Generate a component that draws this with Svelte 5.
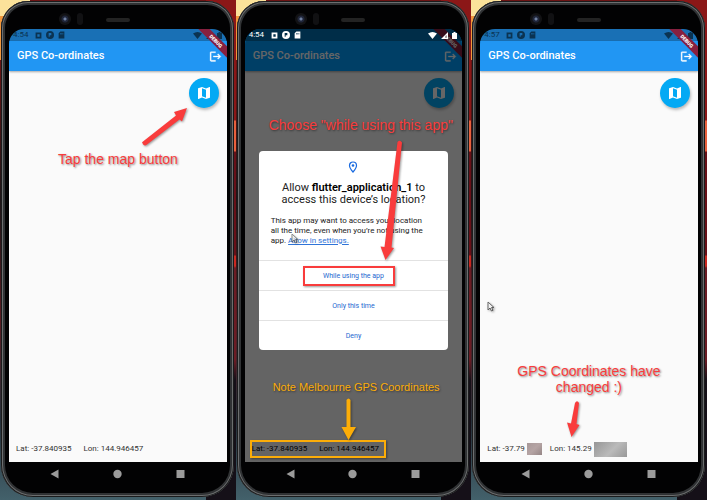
<script>
  const phones = [
    { id: 'tap', time: '4:54', lat: '-37.840935', lon: '144.946457', dim: false, redacted: false },
    { id: 'choose', time: '4:54', lat: '-37.840935', lon: '144.946457', dim: true, redacted: false },
    { id: 'changed', time: '4:57', lat: '-37.79', lon: '145.29', dim: false, redacted: true }
  ];
</script>

{#snippet pointer()}
  <path d="M1 1v8l2-2 1.500 3 1.500-.7L4.600 6.500H7z" fill="#fff" stroke="#444" stroke-width="1" />
{/snippet}

<main>
  {#each phones as phone (phone.id)}
    <section class="panel">
      <div class="phone">
        <div class="bezel">
          <span class="camera"></span>
          <span class="sensor"></span>
          <span class="speaker"></span>
        </div>

        <div class="screen" class:dim={phone.dim}>
          <div class="status">
            <span class="time">{phone.time}</span>
            <svg width="7" height="7" viewBox="0 0 12 12"><path fill="currentColor" fill-rule="evenodd" d="M1 1h10v10H1zM4 4v4h4V4z" /></svg>
            <svg width="8" height="8" viewBox="0 0 12 12"><path fill="currentColor" fill-rule="evenodd" d="M6 0a6 6 0 1 1 0 12A6 6 0 0 1 6 0M4 3v5.500h1.500V6.500H8V3z" /></svg>
            <svg width="7" height="8" viewBox="0 0 12 14"><path fill="currentColor" fill-rule="evenodd" d="M4 1h7v12H1V4zM4 3.500V6h1V3.500zm2 0V6h1V3.500zm2 0V6h1V3.500z" /></svg>
            <span class="spacer"></span>
            <svg width="9" height="7" viewBox="0 0 18 14"><path fill="currentColor" d="M0 3q9-6 18 0L9 14z" /></svg>
            <svg width="7" height="7" viewBox="0 0 14 14"><path fill="currentColor" fill-rule="evenodd" d="M14 0v14H0zM11 6L9 8v4h2z" /></svg>
            <svg width="5" height="7" viewBox="0 0 10 14"><path fill="currentColor" d="M0 2h3V0h4v2h3v12H0z" /></svg>
          </div>

          <header>
            <h1>GPS Co-ordinates</h1>
            <button class="logout" aria-label="Log out">
              <svg width="13" height="13" viewBox="0 0 24 24"><path fill="currentColor" stroke="currentColor" stroke-width=".6" d="M17 7l-1.410 1.410L18.170 11H8v2h10.170l-2.580 2.580L17 17l5-5zM4 5h8V3H4c-1.100 0-2 .9-2 2v14c0 1.100.9 2 2 2h8v-2H4V5z" /></svg>
            </button>
          </header>

          <div class="body">
            <button class="fab" aria-label="Map">
              <svg width="16" height="16" viewBox="0 0 24 24"><path fill="currentColor" fill-rule="evenodd" d="M20.500 3l-.16.03L15 5.100 9 3 3.360 4.900c-.21.07-.36.25-.36.48V20.500c0 .28.22.5.5.5l.16-.03L9 18.900l6 2.100 5.640-1.900c.21-.07.36-.25.36-.48V3.500c0-.28-.22-.5-.5-.5zM15 19l-6-2.110V5l6 2.110V19z" /></svg>
            </button>
            <div class="coords">
              <span>Lat: {phone.lat}</span>
              {#if phone.redacted}<i class="mask short"></i>{/if}
              <span class="lon">Lon: {phone.lon}</span>
              {#if phone.redacted}<i class="mask long"></i>{/if}
            </div>
          </div>

          <div class="debug">DEBUG</div>

          {#if phone.dim}
            <div class="barrier">
              <div class="dialog" role="dialog" aria-labelledby="ask">
                <div class="message">
                  <svg class="pin" width="10" height="12" viewBox="0 0 20 24"><path d="M10 2a7 7 0 0 1 7 7c0 5-7 13-7 13S3 14 3 9a7 7 0 0 1 7-7z" fill="none" stroke="#1a6be0" stroke-width="2.400" /><circle cx="10" cy="9" r="2.600" fill="#1a6be0" /></svg>
                  <h2 id="ask">Allow <b>flutter_application_1</b> to<br />access this device’s location?</h2>
                  <p>This app may want to access your location all the time, even when you’re not using the app. <a href="#settings">Allow in settings.</a></p>
                </div>
                <button class="choice">While using the app</button>
                <button class="choice">Only this time</button>
                <button class="choice">Deny</button>
              </div>
            </div>
          {/if}

          {#if phone.id === 'tap'}
            <p class="note tap">Tap the map button</p>
            <svg class="arrows" width="218" height="432">
              <path d="M133 113.500Q135 118 138 115.500L170.500 90.500L173 92.500L178 79L165 83L167 86.500L134 112.500Z" fill="#f93c3c" />
            </svg>
          {:else if phone.id === 'choose'}
            <p class="note choose">Choose "while using this app"</p>
            <p class="note melbourne">Note Melbourne GPS Coordinates</p>
            <span class="frame red"></span>
            <span class="frame gold"></span>
            <svg class="arrows" width="218" height="432">
              <path d="M152.500 113Q155 110.500 157 113.500L146.500 218.500L149 219L140.500 231L135.500 217.500L139.500 218Z" fill="#f93c3c" />
              <path d="M101.500 371Q103.500 368 105.500 371V398H111L103.500 411L96.500 398H101.500Z" fill="#fcad08" />
              <g transform="translate(46 204)" opacity=".6">{@render pointer()}</g>
            </svg>
          {:else}
            <p class="note changed">GPS Coordinates have<br />changed :)</p>
            <svg class="arrows" width="218" height="432">
              <path d="M95 374Q97 370.500 99 374L96.500 395L99.500 396L91.500 408L87 393.500L91 394.500Z" fill="#f93c3c" />
              <g transform="translate(7 272)" opacity=".8">{@render pointer()}</g>
            </svg>
          {/if}
        </div>

        <nav>
          <button aria-label="Back"><svg width="9" height="10" viewBox="0 0 9 10"><path d="M8.500 .5v9L.5 5z" fill="#9b9b9b" /></svg></button>
          <button aria-label="Home"><svg width="9" height="10" viewBox="0 0 9 10"><circle cx="4.500" cy="5" r="4.200" fill="#9b9b9b" /></svg></button>
          <button aria-label="Overview"><svg width="9" height="10" viewBox="0 0 9 10"><path d="M.5 1h8v8h-8z" fill="#9b9b9b" /></svg></button>
        </nav>
      </div>
    </section>
  {/each}
</main>

<style>
  * {
    box-sizing: border-box;
  }
  main {
    display: grid;
    grid-template-columns: repeat(3, 1fr);
    min-height: 100vh;
    font-family: Roboto, sans-serif;
  }
  h1, h2, p {
    margin: 0;
    font-weight: 400;
  }
  button {
    display: grid;
    place-items: center;
    border: 0;
    padding: 0;
    background: none;
    color: inherit;
    font-family: inherit;
  }
  svg {
    display: block;
    flex: none;
  }
  .panel {
    display: flex;
    padding: 1px 2px 3px 1px;
    background:
      linear-gradient(#fbe29a 16px, #f2983c 16px 60px, transparent 60px) left / 30px 100% no-repeat,
      linear-gradient(#8b1717 120px, #e8603c 121px 151px, #681018 152px 255px, #c92820 256px 266px, #6b1c24 268px 360px, #151018 380px) right / 30px 100% no-repeat,
      linear-gradient(#6b1414 60px, #1c1517 200px, #5b1c22 320px, #26303a 420px, #43616b);
  }
  .phone {
    flex: 1;
    min-width: 0;
    display: flex;
    flex-direction: column;
    padding: 0 7px 0 8px;
    border-radius: 27px 27px 32px 32px;
    background: #020203;
    box-shadow: inset 0 0 0 1px #1a1b1c, inset 0 0 0 2px #6c6e6f, inset 0 0 0 4px #303234;
  }
  .bezel {
    position: relative;
    height: 28px;
    display: flex;
    align-items: center;
    justify-content: center;
    padding-top: 9px;
  }
  .speaker {
    width: 24px;
    height: 4px;
    margin-bottom: 9px;
    margin-top: 9px;
    border-radius: 2px;
    background: #232323;
  }
  .camera {
    position: absolute;
    left: 50px;
    top: 12px;
    width: 12px;
    height: 12px;
    border-radius: 50%;
    background: radial-gradient(#6f7f9f 0 1px, #20263a 2px 3px, #121214 4px);
  }
  .sensor {
    position: absolute;
    left: 68px;
    top: 12px;
    width: 6px;
    height: 12px;
    border-radius: 3px;
    background: #111113;
  }
  .screen {
    position: relative;
    flex: 1;
    display: flex;
    flex-direction: column;
    overflow: hidden;
    border-radius: 15px 15px 0 0;
    background: #1970b5;
  }
  .screen.dim {
    background: #0072b5;
  }
  .status {
    height: 12px;
    display: flex;
    align-items: center;
    gap: 4px;
    padding: 0 5px 0 4px;
    color: #0b3351;
  }
  .dim .status {
    position: relative;
    z-index: 3;
    color: #fff;
  }
  .time {
    width: 18px;
    font-size: 8px;
    line-height: 12px;
  }
  .spacer {
    flex: 1;
  }
  header {
    height: 30px;
    display: flex;
    align-items: center;
    justify-content: space-between;
    padding: 0 5px 0 8px;
    background: #2196f3;
    color: #fff;
    box-shadow: 0 1px 2px #0005;
    z-index: 1;
  }
  .dim header {
    background: #009dff;
  }
  h1 {
    font-size: 11px;
    line-height: 14px;
    font-weight: 500;
  }
  .body {
    flex: 1;
    display: flex;
    flex-direction: column;
    justify-content: space-between;
    padding: 7px 8px 5px 7px;
    background: #fafafa;
  }
  .fab {
    align-self: flex-end;
    width: 30px;
    height: 30px;
    border-radius: 50%;
    background: #03a9f4;
    color: #fff;
    box-shadow: 1px 2px 3px #0004;
  }
  .coords {
    display: flex;
    align-items: center;
    height: 16px;
    font-size: 8px;
    line-height: 12px;
    color: #333;
  }
  .dim .coords {
    color: #000;
  }
  .lon {
    margin-left: 12px;
  }
  .mask {
    margin-left: 2px;
  }
  .mask + .lon {
    margin-left: 8px;
  }
  .short {
    width: 15px;
    height: 12px;
    background: linear-gradient(135deg, #a79898, #b5a4a4 50%, #958686);
  }
  .long {
    width: 33px;
    height: 15px;
    background: linear-gradient(135deg, #969696, #bababa 55%, #989898);
  }
  .debug {
    position: absolute;
    z-index: 1;
    top: 8px;
    right: -14px;
    width: 50px;
    height: 8px;
    transform: rotate(45deg);
    background: #87203f;
    color: #fff;
    font-size: 5px;
    line-height: 8px;
    font-weight: 900;
    text-align: center;
  }
  .barrier {
    position: absolute;
    inset: 0;
    z-index: 2;
    display: flex;
    flex-direction: column;
    padding: 122px 14px 0;
    background: #0009;
  }
  .dialog {
    border-radius: 4px;
    background: #fff;
    color: #222;
  }
  .message {
    height: 109px;
    padding: 10px 12px 0;
  }
  .pin {
    margin: 0 auto;
  }
  h2 {
    margin: 9px -8px 10px;
    font-size: 11px;
    line-height: 12px;
    text-align: center;
    white-space: nowrap;
  }
  h2 b {
    font-weight: 600;
    color: #000;
  }
  .message p {
    margin-right: 8px;
    font-size: 8px;
    line-height: 10px;
  }
  a {
    color: #2f74d8;
  }
  .choice {
    width: 100%;
    height: 30px;
    border-top: 1px solid #e2e2e2;
    color: #2468d0;
    font-size: 7px;
    line-height: 10px;
  }
  .note {
    position: absolute;
    z-index: 4;
    color: #f93c3c;
    font-family: "Liberation Sans", Arial, sans-serif;
    font-size: 14px;
    line-height: 16px;
    text-align: center;
    white-space: nowrap;
    text-shadow: 1px 1px 2px #0007;
  }
  .tap {
    top: 122px;
    left: 49px;
  }
  .choose {
    top: 88px;
    left: 24px;
  }
  .melbourne {
    top: 350px;
    left: 28px;
    color: #fcad08;
    font-size: 11px;
  }
  .changed {
    top: 334px;
    left: 37px;
  }
  .arrows {
    position: absolute;
    z-index: 4;
    inset: 0 auto auto 0;
    pointer-events: none;
    filter: drop-shadow(1px 1px 1px #0006);
  }
  .frame {
    position: absolute;
    z-index: 4;
    border: 2px solid #f93c3c;
    pointer-events: none;
    box-shadow: 1px 1px 2px #0006;
  }
  .red {
    top: 237px;
    left: 58px;
    width: 92px;
    height: 20px;
  }
  .gold {
    top: 411px;
    left: 5px;
    width: 136px;
    height: 18px;
    border-color: #fcad08;
  }
  nav {
    display: flex;
    justify-content: space-between;
    height: 35px;
    padding: 7px 42px 0 41px;
    align-items: flex-start;
  }
</style>
